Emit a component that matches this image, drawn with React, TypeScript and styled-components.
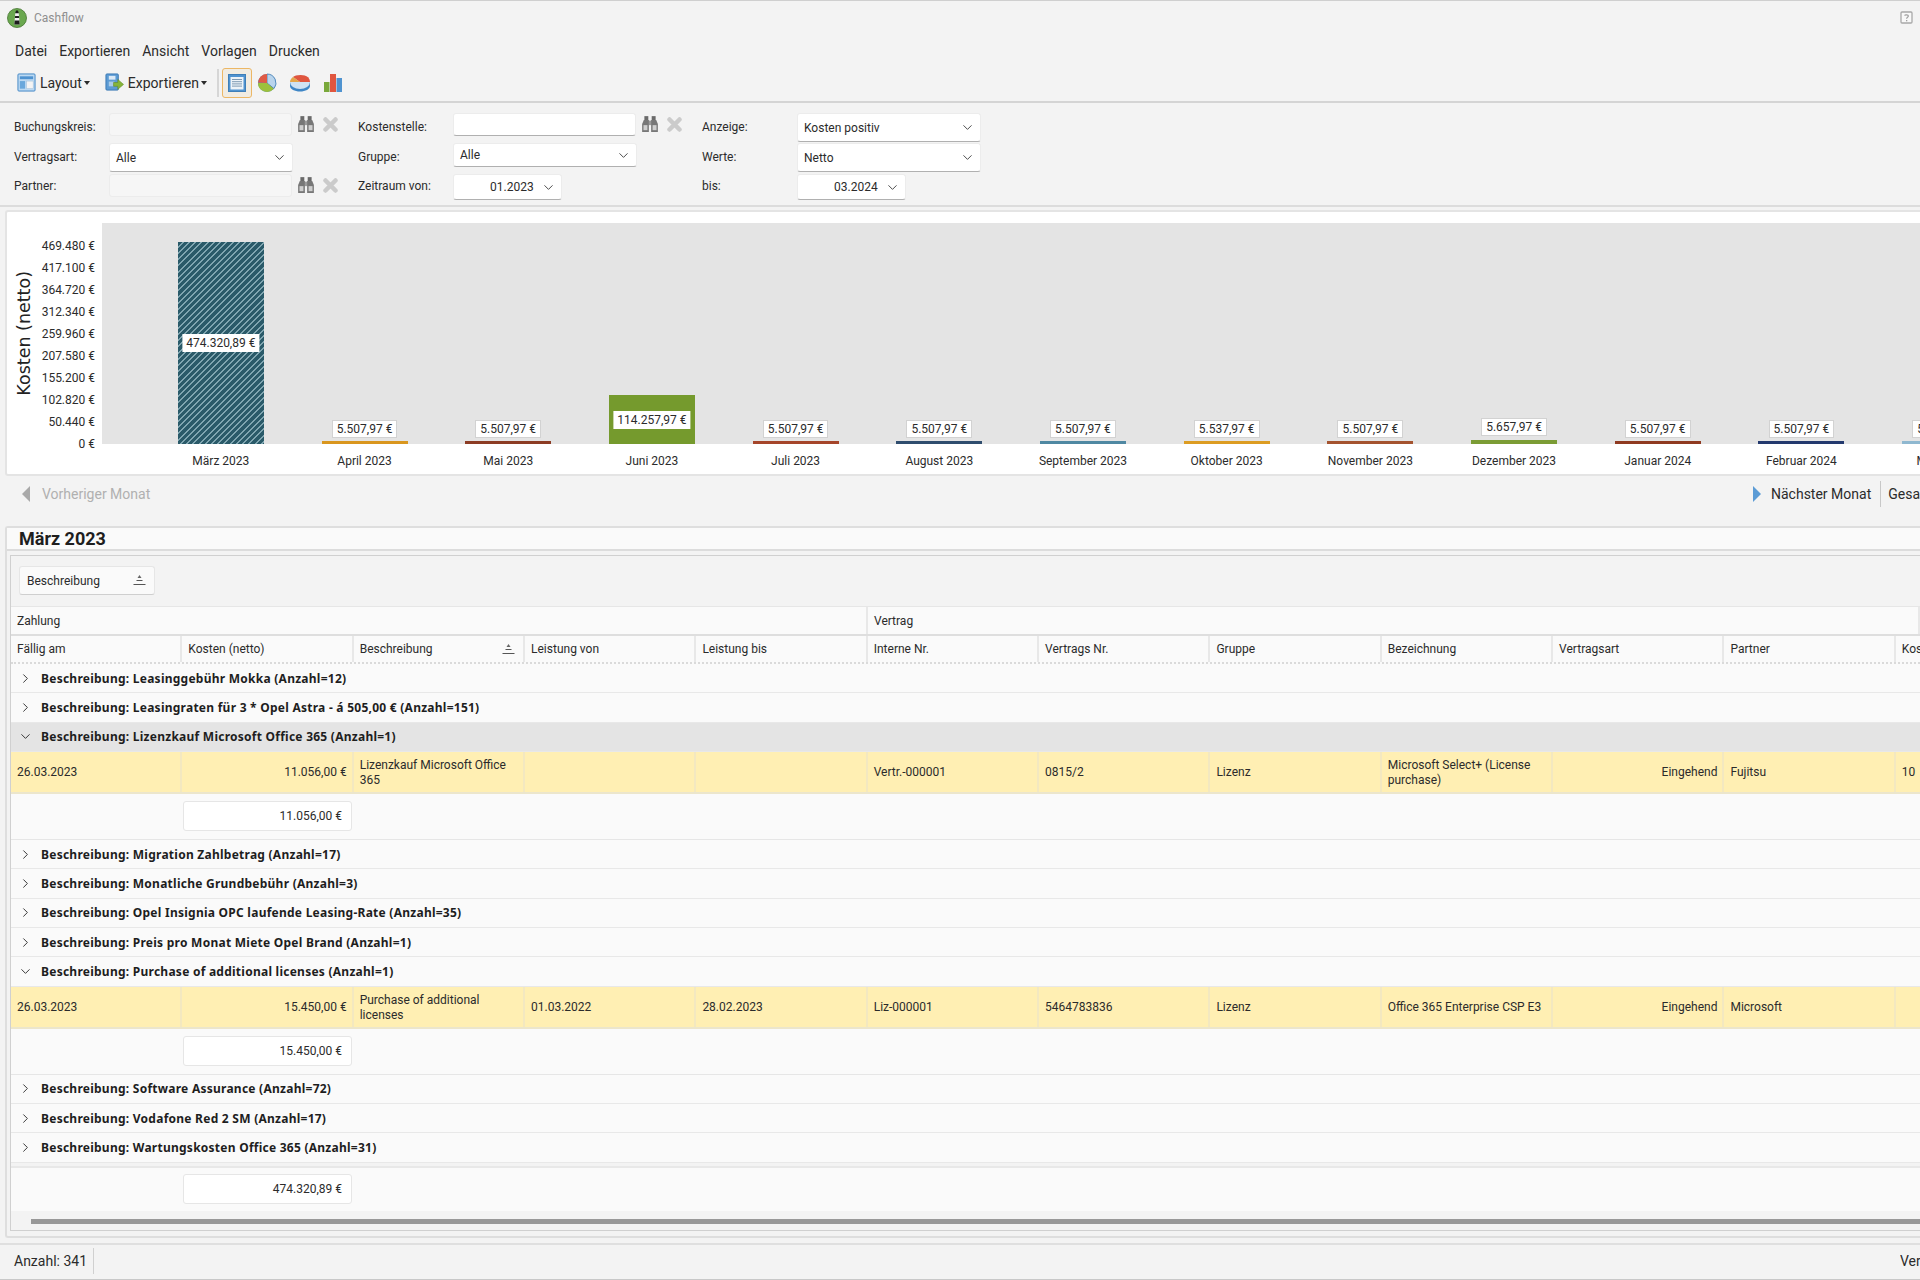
import React from "react";
import styled, { createGlobalStyle } from "styled-components";
import { ChevronDown, ChevronRight } from "lucide-react";

const GlobalStyle = createGlobalStyle`
  html, body {
    margin: 0;
    padding: 0;
    background: #f3f3f3;
  }
  body {
    width: 1920px;
    height: 1280px;
    overflow: hidden;
    font-family: Roboto, "Liberation Sans", sans-serif;
    font-size: 12px;
    color: #2b2b2b;
  }
  * {
    box-sizing: border-box;
  }
`;

// daten
const yTicks = ["469.480 €", "417.100 €", "364.720 €", "312.340 €", "259.960 €", "207.580 €", "155.200 €", "102.820 €", "50.440 €", "0 €"];

type Month = { label: string; value: string; color: string; height: number; inside?: boolean; hatch?: boolean };

const months: Month[] = [
  { label: "März 2023", value: "474.320,89 €", color: "#2a5a69", height: 202, inside: true, hatch: true },
  { label: "April 2023", value: "5.507,97 €", color: "#d9961e", height: 3 },
  { label: "Mai 2023", value: "5.507,97 €", color: "#8c3c24", height: 3 },
  { label: "Juni 2023", value: "114.257,97 €", color: "#759a2d", height: 49, inside: true },
  { label: "Juli 2023", value: "5.507,97 €", color: "#a5452a", height: 3 },
  { label: "August 2023", value: "5.507,97 €", color: "#2f4d6e", height: 3 },
  { label: "September 2023", value: "5.507,97 €", color: "#4f88a2", height: 3 },
  { label: "Oktober 2023", value: "5.537,97 €", color: "#dc9c22", height: 3 },
  { label: "November 2023", value: "5.507,97 €", color: "#a4532f", height: 3 },
  { label: "Dezember 2023", value: "5.657,97 €", color: "#7b9c35", height: 4 },
  { label: "Januar 2024", value: "5.507,97 €", color: "#8f3a20", height: 3 },
  { label: "Februar 2024", value: "5.507,97 €", color: "#23396e", height: 3 },
  { label: "März 2024", value: "5.507,97 €", color: "#8fb8d0", height: 3 },
];

const bandCols = ["Zahlung", "Vertrag"];
const headCols = ["Fällig am", "Kosten (netto)", "Beschreibung", "Leistung von", "Leistung bis", "Interne Nr.", "Vertrags Nr.", "Gruppe", "Bezeichnung", "Vertragsart", "Partner", "Kostenstelle"];

const row1 = ["26.03.2023", "11.056,00 €", "Lizenzkauf Microsoft Office 365", "", "", "Vertr.-000001", "0815/2", "Lizenz", "Microsoft Select+ (License purchase)", "Eingehend", "Fujitsu", "10"];
const row2 = ["26.03.2023", "15.450,00 €", "Purchase of additional licenses", "01.03.2022", "28.02.2023", "Liz-000001", "5464783836", "Lizenz", "Office 365 Enterprise CSP E3", "Eingehend", "Microsoft", ""];
const rightCols = [1, 9];

// kleine icons
const AppIcon = () => (
  <svg width="20" height="20" viewBox="0 0 20 20">
    <circle cx="10" cy="10" r="9.5" fill="#6aa84f" stroke="#44742f" strokeWidth=".8" />
    <path d="M8.300 5h3.400l1 11.500H7.300z" fill="#f4f4f4" />
    <path d="M9 2.500h2l.8 2.800H8.200zM8.100 8h3.800l.2 2H7.900zM7.700 12.500h4.600l.4 4H7.300z" fill="#1c1c1c" />
  </svg>
);

const HelpIcon = () => (
  <svg width="13" height="13" viewBox="0 0 13 13">
    <rect x="1" y="1" width="11" height="11" rx="1" fill="#f8f8f8" stroke="#a8a8a8" strokeWidth="1.3" />
    <path d="M4.600 4.600c.3-1 3.800-1.200 3.800.5 0 1.200-1.800 1.200-1.800 2.600" fill="none" stroke="#a0a0a0" strokeWidth="1.200" />
    <rect x="6" y="9" width="1.300" height="1.300" fill="#a0a0a0" />
  </svg>
);

const LayoutIcon = () => (
  <svg width="19" height="19" viewBox="0 0 20 20">
    <rect x="1" y="1" width="18" height="18" rx="1" fill="#bcd9f2" stroke="#3f86c6" />
    <rect x="3" y="3.500" width="14" height="3" fill="#4f93d0" />
    <rect x="3" y="8.500" width="5.500" height="8" fill="#6aa8dc" />
    <rect x="10" y="8.500" width="7" height="8" fill="#f4f4f4" stroke="#9dbbd6" strokeWidth=".5" />
  </svg>
);

const ExportIcon = () => (
  <svg width="19" height="19" viewBox="0 0 20 20">
    <rect x="1" y="1" width="13" height="17" rx="1" fill="#5c9bd4" stroke="#3a78b4" />
    <rect x="4" y="3" width="7" height="4" fill="#dbe9f6" />
    <rect x="4" y="9" width="6" height="5" fill="#a9cbe9" />
    <path d="M9 10h4.500V6.800L19.500 12l-6 5.200V14H9z" fill="#86b53a" stroke="#5f8a22" strokeWidth=".6" />
  </svg>
);

const TableIcon = () => (
  <svg width="18" height="18" viewBox="0 0 18 18">
    <rect x=".5" y=".5" width="17" height="17" fill="#4f93d0" stroke="#3f7fb8" />
    <rect x="2.500" y="3" width="13" height="12.500" fill="#edf3f8" />
    <path d="M4 5.500h10M4 7.700h10M4 9.900h10M4 12.100h10" stroke="#7d99b2" strokeWidth="1" />
  </svg>
);

const PieIcon = () => (
  <svg width="20" height="20" viewBox="0 0 20 20">
    <circle cx="10" cy="10" r="9" fill="#4f8ac0" />
    <path d="M10 10V1a9 9 0 0 1 7 14.600z" fill="#b9d4ec" stroke="#3d7bb3" strokeWidth=".8" />
    <path d="M10 10 1 9.500a9 9 0 0 1 9-8.500z" fill="#e05a45" />
    <path d="M10 10 1 10a9 9 0 0 0 15.800 5.800z" fill="#9cc03c" />
  </svg>
);

const Pie3dIcon = () => (
  <svg width="22" height="20" viewBox="0 0 22 20">
    <path d="M1 9v4c0 3 4.500 5.500 10 5.500S21 16 21 13V9z" fill="#3f86c6" />
    <ellipse cx="11" cy="9" rx="10" ry="7" fill="#cfe2f3" />
    <path d="M11 9 4 4c2-2 11-3.500 15 .3 1 1 2 3 2 4.700z" fill="#e0563f" />
    <path d="M11 9 1 9c0-2 1.500-4 3-5z" fill="#e6a64a" />
  </svg>
);

const BarsIcon = () => (
  <svg width="20" height="20" viewBox="0 0 20 20">
    <rect x="1" y="9" width="5.500" height="10" fill="#79a83a" />
    <rect x="7" y="1" width="6" height="18" fill="#e0563f" />
    <rect x="13.500" y="5" width="5.500" height="14" fill="#4f93d0" />
  </svg>
);

const Binoculars = () => (
  <svg width="18" height="18" viewBox="0 0 16 16">
    <rect x="3" y="1" width="3.500" height="4" fill="#6a6a6a" />
    <rect x="9.500" y="1" width="3.500" height="4" fill="#6a6a6a" />
    <rect x="6.500" y="5" width="3" height="4" fill="#9a9a9a" />
    <path d="M2.500 4.500h4.500V15H1V8z" fill="#777" />
    <path d="M9 4.500h4.500L15 8v7H9z" fill="#777" />
    <rect x="2.200" y="9" width="3.500" height="4.500" fill="#cfcfcf" />
    <rect x="10.300" y="9" width="3.500" height="4.500" fill="#cfcfcf" />
  </svg>
);

const CrossIcon = () => (
  <svg width="15" height="15" viewBox="0 0 15 15">
    <path d="M2.500 2.500l10 10M12.500 2.500l-10 10" stroke="#cbcbcb" strokeWidth="4.500" strokeLinecap="round" />
  </svg>
);

const SortIcon = () => (
  <svg width="13" height="11" viewBox="0 0 13 11">
    <path d="M6.500 0 8.500 3h-4z" fill="#666" />
    <path d="M3.500 5.500h6M.5 9.500h12" stroke="#555" strokeWidth="1.200" />
  </svg>
);

const Field = ({ wide = true, height = 26, text, align = "left" }: { wide?: boolean; height?: number; text: string; align?: "left" | "right" }) => (
  <SelectBox $wide={wide} $height={height} $align={align}>
    <SelectText>{text}</SelectText>
    <ChevronDown size={15} strokeWidth={1.4} color="#333" />
  </SelectBox>
);

const App = () => {
  const groupRow = (text: string, open = false, selected = false) => (
    <GroupRow $selected={selected} key={text}>
      <Toggle>{open ? <ChevronDown size={15} strokeWidth={1.4} /> : <ChevronRight size={15} strokeWidth={1.4} />}</Toggle>
      {text}
    </GroupRow>
  );

  const dataRow = (cells: string[]) => (
    <DataRow>
      {cells.map((c, i) => (
        <DataCell key={i} $right={rightCols.includes(i)}>
          {c}
        </DataCell>
      ))}
    </DataRow>
  );

  const footRow = (value: string) => (
    <FootRow>
      <SumBox>{value}</SumBox>
    </FootRow>
  );

  return (
    <Page>
      <GlobalStyle />
      <TitleBar>
        <TitleLeft>
          <AppIcon />
          <TitleText>Cashflow</TitleText>
        </TitleLeft>
        <HelpIcon />
      </TitleBar>

      <MenuBar>
        {["Datei", "Exportieren", "Ansicht", "Vorlagen", "Drucken"].map((m) => (
          <MenuItem key={m}>{m}</MenuItem>
        ))}
      </MenuBar>

      <ToolBar>
        <ToolDrop>
          <LayoutIcon />
          Layout
          <Caret />
        </ToolDrop>
        <ToolDrop>
          <ExportIcon />
          Exportieren
          <Caret />
        </ToolDrop>
        <ToolSep />
        <ToolButton $active>
          <TableIcon />
        </ToolButton>
        <ToolButton>
          <PieIcon />
        </ToolButton>
        <ToolButton>
          <Pie3dIcon />
        </ToolButton>
        <ToolButton>
          <BarsIcon />
        </ToolButton>
      </ToolBar>

      <FilterPanel>
        <FieldLabel>Buchungskreis:</FieldLabel>
        <TextBox $disabled />
        <FieldIcons>
          <Binoculars />
          <CrossIcon />
        </FieldIcons>
        <FieldLabel>Kostenstelle:</FieldLabel>
        <TextBox />
        <FieldIcons>
          <Binoculars />
          <CrossIcon />
        </FieldIcons>
        <FieldLabel>Anzeige:</FieldLabel>
        <Field text="Kosten positiv" height={29} />
        <span />

        <FieldLabel>Vertragsart:</FieldLabel>
        <Field text="Alle" height={29} />
        <span />
        <FieldLabel>Gruppe:</FieldLabel>
        <Field text="Alle" height={24} />
        <span />
        <FieldLabel>Werte:</FieldLabel>
        <Field text="Netto" height={29} />
        <span />

        <FieldLabel>Partner:</FieldLabel>
        <TextBox $disabled />
        <FieldIcons>
          <Binoculars />
          <CrossIcon />
        </FieldIcons>
        <FieldLabel>Zeitraum von:</FieldLabel>
        <Field text="01.2023" wide={false} align="right" />
        <span />
        <FieldLabel>bis:</FieldLabel>
        <Field text="03.2024" wide={false} align="right" />
        <span />
      </FilterPanel>

      <ChartPanel>
        <AxisTitleCol>
          <AxisTitle>Kosten (netto)</AxisTitle>
        </AxisTitleCol>
        <YAxis>
          {yTicks.map((t) => (
            <YTick key={t}>{t}</YTick>
          ))}
        </YAxis>
        <ChartBody>
          <Plot>
            {months.map((m) => (
              <BarSlot key={m.label}>
                {!m.inside && <ValueLabel $raise={m.height > 3 ? 1 : 0}>{m.value}</ValueLabel>}
                <Bar $color={m.color} $hatch={m.hatch} style={{ height: m.height }}>
                  {m.inside && <InsideLabel>{m.value}</InsideLabel>}
                </Bar>
              </BarSlot>
            ))}
          </Plot>
          <XAxis>
            {months.map((m) => (
              <XTick key={m.label}>{m.label}</XTick>
            ))}
          </XAxis>
        </ChartBody>
      </ChartPanel>

      <NavRow>
        <NavPrev>
          <svg width="10" height="16" viewBox="0 0 10 16">
            <path d="M9 0v16L1 8z" fill="#a9a9a9" />
          </svg>
          Vorheriger Monat
        </NavPrev>
        <NavNext>
          <svg width="10" height="16" viewBox="0 0 10 16">
            <path d="M1 0v16l8-8z" fill="#5b9bd5" />
          </svg>
          <span>Nächster Monat</span>
          <NavSep />
          <NavAll>Gesamt</NavAll>
        </NavNext>
      </NavRow>

      <DetailFrame>
        <Heading>März 2023</Heading>
        <GridPanel>
          <GroupArea>
            <GroupChip>
              Beschreibung
              <SortIcon />
            </GroupChip>
          </GroupArea>
          <BandRow>
            {bandCols.map((b) => (
              <BandCell key={b}>{b}</BandCell>
            ))}
          </BandRow>
          <HeadRow>
            {headCols.map((h, i) => (
              <HeadCell key={h}>
                {h}
                {i === 2 && <SortIcon />}
              </HeadCell>
            ))}
          </HeadRow>
          {groupRow("Beschreibung: Leasinggebühr Mokka (Anzahl=12)")}
          {groupRow("Beschreibung: Leasingraten für 3 * Opel Astra - á 505,00 € (Anzahl=151)")}
          {groupRow("Beschreibung: Lizenzkauf Microsoft Office 365 (Anzahl=1)", true, true)}
          {dataRow(row1)}
          {footRow("11.056,00 €")}
          {groupRow("Beschreibung: Migration Zahlbetrag (Anzahl=17)")}
          {groupRow("Beschreibung: Monatliche Grundbebühr (Anzahl=3)")}
          {groupRow("Beschreibung: Opel Insignia OPC laufende Leasing-Rate (Anzahl=35)")}
          {groupRow("Beschreibung: Preis pro Monat Miete Opel Brand (Anzahl=1)")}
          {groupRow("Beschreibung: Purchase of additional licenses (Anzahl=1)", true)}
          {dataRow(row2)}
          {footRow("15.450,00 €")}
          {groupRow("Beschreibung: Software Assurance (Anzahl=72)")}
          {groupRow("Beschreibung: Vodafone Red 2 SM (Anzahl=17)")}
          {groupRow("Beschreibung: Wartungskosten Office 365 (Anzahl=31)")}
          <TotalRow>
            <SumBox>474.320,89 €</SumBox>
          </TotalRow>
          <ScrollTrack>
            <ScrollThumb />
          </ScrollTrack>
        </GridPanel>
      </DetailFrame>

      <StatusBar>
        <StatusLeft>Anzahl: 341</StatusLeft>
        <StatusRight>Ver</StatusRight>
      </StatusBar>
    </Page>
  );
};
export default App;

const Page = styled.div`
  width: 1920px;
  height: 1280px;
  display: flex;
  flex-direction: column;
  overflow: hidden;
  background: #f3f3f3;
`;

// kopf
const TitleBar = styled.div`
  height: 36px;
  flex: none;
  border-top: 1px solid #cfcfcf;
  display: flex;
  align-items: center;
  justify-content: space-between;
  padding: 0 7px 2px 7px;
`;
const TitleLeft = styled.div`
  display: flex;
  align-items: center;
  gap: 7px;
`;
const TitleText = styled.span`
  color: #8f8f8f;
  font-size: 12px;
`;
const MenuBar = styled.div`
  height: 30px;
  flex: none;
  display: flex;
  align-items: center;
  gap: 12px;
  padding-left: 15px;
  font-size: 14px;
`;
const MenuItem = styled.span``;
const ToolBar = styled.div`
  height: 37px;
  flex: none;
  display: flex;
  align-items: center;
  padding: 0 0 2px 17px;
  font-size: 14px;
  border-bottom: 2px solid #d4d4d4;
`;
const ToolDrop = styled.div`
  display: flex;
  align-items: center;
  gap: 4px;
  margin-right: 15px;
`;
const Caret = styled.span`
  width: 0;
  height: 0;
  margin-left: -2px;
  border-left: 3.5px solid transparent;
  border-right: 3.5px solid transparent;
  border-top: 4px solid #2b2b2b;
`;
const ToolSep = styled.div`
  width: 2px;
  height: 28px;
  background: #d6d6d6;
  margin: 0 3px 0 -5px;
`;
const ToolButton = styled.div<{ $active?: boolean }>`
  width: 30px;
  height: 30px;
  margin-right: ${(p) => (p.$active ? "0" : "3px")};
  display: flex;
  align-items: center;
  justify-content: center;
  border-radius: 3px;
  border: 1px solid ${(p) => (p.$active ? "#ecb765" : "transparent")};
  background: ${(p) => (p.$active ? "#f1ece2" : "transparent")};
`;

// filter
const FilterPanel = styled.div`
  height: 104px;
  flex: none;
  padding: 10px 0 0 14px;
  display: grid;
  grid-template-columns: repeat(3, 95px 183px 66px);
  grid-template-rows: 30px 31px 26px;
  border-bottom: 2px solid #dcdcdc;
`;
const FieldLabel = styled.div`
  align-self: center;
  margin-bottom: 3px;
  font-size: 12px;
`;
const TextBox = styled.div<{ $disabled?: boolean }>`
  height: 23px;
  align-self: start;
  border-radius: 3px;
  background: ${(p) => (p.$disabled ? "#f6f6f6" : "#fff")};
  border: 1px solid #ececec;
  border-bottom-color: ${(p) => (p.$disabled ? "#ececec" : "#b0b0b0")};
`;
const FieldIcons = styled.div`
  display: flex;
  align-items: center;
  align-self: start;
  height: 22px;
  gap: 8px;
  padding-left: 5px;
`;
const SelectBox = styled.div<{ $wide: boolean; $height: number; $align: string }>`
  width: ${(p) => (p.$wide ? "184px" : "109px")};
  height: ${(p) => p.$height}px;
  align-self: start;
  display: flex;
  align-items: center;
  justify-content: space-between;
  padding: 0 5px 0 6px;
  background: #fff;
  border-radius: 3px;
  border: 1px solid #ececec;
  border-bottom-color: #b0b0b0;
  ${(p) => (p.$align === "right" ? "padding-left: 36px;" : "")}
`;
const SelectText = styled.span`
  font-size: 12px;
`;

// diagramm
const ChartPanel = styled.div`
  height: 266px;
  flex: none;
  margin: 3px 0 0 5px;
  display: flex;
  background: #fff;
  border: 2px solid #e4e4e4;
  border-right: none;
  border-radius: 3px 0 0 3px;
  padding-top: 11px;
`;
const AxisTitleCol = styled.div`
  width: 34px;
  flex: none;
  height: 221px;
  display: flex;
  align-items: center;
  justify-content: center;
`;
const AxisTitle = styled.div`
  writing-mode: vertical-rl;
  transform: rotate(180deg);
  font-family: "DejaVu Sans", sans-serif;
  font-size: 17.5px;
  color: #222;
  white-space: nowrap;
`;
const YAxis = styled.div`
  width: 54px;
  flex: none;
  height: 232px;
  padding-top: 12px;
  display: flex;
  flex-direction: column;
  align-items: flex-end;
`;
const YTick = styled.div`
  height: 22.2px;
  line-height: 22px;
  font-size: 12px;
  white-space: nowrap;
`;
const ChartBody = styled.div`
  margin-left: 7px;
  flex: 1;
  min-width: 0;
  overflow: hidden;
`;
const Plot = styled.div`
  height: 221px;
  background: #e4e4e4;
  display: flex;
  padding-left: 47px;
`;
const BarSlot = styled.div`
  width: 143.7px;
  flex: none;
  display: flex;
  flex-direction: column;
  align-items: center;
  justify-content: flex-end;
`;
const ValueLabel = styled.div<{ $raise: number }>`
  margin-bottom: ${(p) => 3 + p.$raise}px;
  height: 18px;
  line-height: 16px;
  padding: 0 4px;
  background: #fff;
  border: 1px solid #d2d2d2;
  font-size: 12px;
  white-space: nowrap;
`;
const Bar = styled.div<{ $color: string; $hatch?: boolean }>`
  position: relative;
  width: 86px;
  flex: none;
  background: ${(p) =>
    p.$hatch ? `repeating-linear-gradient(135deg, ${p.$color} 0 3px, #7fa5b0 3px 4.4px)` : p.$color};
`;
const InsideLabel = styled.div`
  position: absolute;
  top: 50%;
  left: 50%;
  transform: translate(-50%, -50%);
  height: 18px;
  line-height: 18px;
  padding: 0 4px;
  background: #fff;
  font-size: 12px;
  white-space: nowrap;
`;
const XAxis = styled.div`
  display: flex;
  padding-left: 47px;
`;
const XTick = styled.div`
  width: 143.7px;
  flex: none;
  text-align: center;
  padding-top: 10px;
  font-size: 12px;
  white-space: nowrap;
`;

// navigation
const NavRow = styled.div`
  height: 50px;
  flex: none;
  display: flex;
  justify-content: space-between;
  align-items: flex-start;
  padding: 5px 0 0 21px;
  font-size: 14px;
`;
const NavPrev = styled.div`
  display: flex;
  align-items: center;
  gap: 11px;
  height: 26px;
  color: #b0b0b0;
`;
const NavNext = styled.div`
  display: flex;
  align-items: center;
  gap: 9px;
  height: 26px;
  width: 168px;
  white-space: nowrap;
  overflow: hidden;
  & > * {
    flex: none;
  }
`;
const NavSep = styled.div`
  width: 1px;
  height: 26px;
  background: #c8c8c8;
`;
const NavAll = styled.span`
  margin-left: -2px;
`;

// tabelle
const DetailFrame = styled.div`
  flex: 1;
  min-height: 0;
  margin-left: 5px;
  display: flex;
  flex-direction: column;
  border: 2px solid #dedede;
  border-right: none;
  border-radius: 3px 0 0 3px;
  margin-bottom: 5px;
`;
const Heading = styled.div`
  height: 23px;
  flex: none;
  background: #fafafa;
  border-bottom: 2px solid #dcdcdc;
  padding-left: 12px;
  font-size: 18px;
  font-weight: 700;
  line-height: 21px;
  color: #1e1e1e;
`;
const GridPanel = styled.div`
  margin: 4px 0 5px 3px;
  flex: 1;
  min-height: 0;
  border: 1px solid #d0d0d0;
  border-right: none;
  overflow: hidden;
`;
const GroupArea = styled.div`
  height: 50px;
  background: #f3f3f3;
  padding: 10px 0 0 8px;
`;
const GroupChip = styled.div`
  width: 136px;
  height: 29px;
  display: flex;
  align-items: center;
  justify-content: space-between;
  padding: 0 8px 0 7px;
  background: #fafafa;
  border: 1px solid #e6e6e6;
  border-bottom-color: #cfcfcf;
  border-radius: 3px;
`;
const BandRow = styled.div`
  height: 30px;
  display: grid;
  grid-template-columns: 857px 1fr;
  background: #fafafa;
  border-top: 1px solid #e6e6e6;
  border-bottom: 2px solid #dedede;
`;
const BandCell = styled.div`
  display: flex;
  align-items: center;
  padding-left: 6px;
  border-right: 2px solid #e8e8e8;
`;
const cols = "repeat(12, 171.35px)";
const HeadRow = styled.div`
  height: 28px;
  display: grid;
  grid-template-columns: ${cols};
  background: #fafafa;
  border-bottom: 2px dotted #dadada;
`;
const HeadCell = styled.div`
  display: flex;
  align-items: center;
  justify-content: space-between;
  padding: 0 8px 0 6px;
  border-right: 2px solid #e8e8e8;
  white-space: nowrap;
`;
const GroupRow = styled.div<{ $selected: boolean }>`
  height: 29.33px;
  display: flex;
  align-items: center;
  background: ${(p) => (p.$selected ? "#e4e4e4" : "#fafafa")};
  border-bottom: 1px solid #e8e8e8;
  font-family: "Noto Sans", sans-serif;
  font-weight: 700;
  letter-spacing: 0.25px;
  color: #1e1e1e;
`;
const Toggle = styled.span`
  width: 29px;
  display: flex;
  justify-content: center;
  margin-right: 1px;
`;
const DataRow = styled.div`
  height: 42px;
  display: grid;
  grid-template-columns: ${cols};
  background: #ffefb3;
  border-bottom: 2px solid #ece6cc;
`;
const DataCell = styled.div<{ $right: boolean }>`
  display: flex;
  align-items: center;
  justify-content: ${(p) => (p.$right ? "flex-end" : "flex-start")};
  padding: 2px 5px 0 6px;
  line-height: 15px;
  border-right: 2px solid #f3e8c0;
`;
const FootRow = styled.div`
  height: 46px;
  padding-left: 172px;
  display: flex;
  align-items: center;
  background: #fafafa;
  border-bottom: 1px solid #e6e6e6;
`;
const TotalRow = styled.div`
  margin-top: 3px;
  height: 45px;
  padding-left: 172px;
  display: flex;
  align-items: center;
  background: #fafafa;
  border-top: 2px solid #e8e8e8;
`;
const SumBox = styled.div`
  width: 169px;
  height: 30px;
  display: flex;
  align-items: center;
  justify-content: flex-end;
  padding-right: 9px;
  background: #fff;
  border: 1px solid #e6e6e6;
  border-radius: 3px;
`;
const ScrollTrack = styled.div`
  height: 22px;
  padding: 8px 0 0 20px;
  background: #f3f3f3;
`;
const ScrollThumb = styled.div`
  height: 5px;
  background: #989898;
`;

// status
const StatusBar = styled.div`
  height: 37px;
  flex: none;
  display: flex;
  align-items: center;
  justify-content: space-between;
  padding: 0 0 2px 14px;
  font-size: 14px;
  border-top: 2px solid #dfdfdf;
  border-bottom: 1px solid #c8c8c8;
`;
const StatusLeft = styled.div`
  height: 26px;
  line-height: 26px;
  padding-right: 6px;
  border-right: 1px solid #d0d0d0;
`;
const StatusRight = styled.div`
  width: 20px;
  overflow: hidden;
`;
